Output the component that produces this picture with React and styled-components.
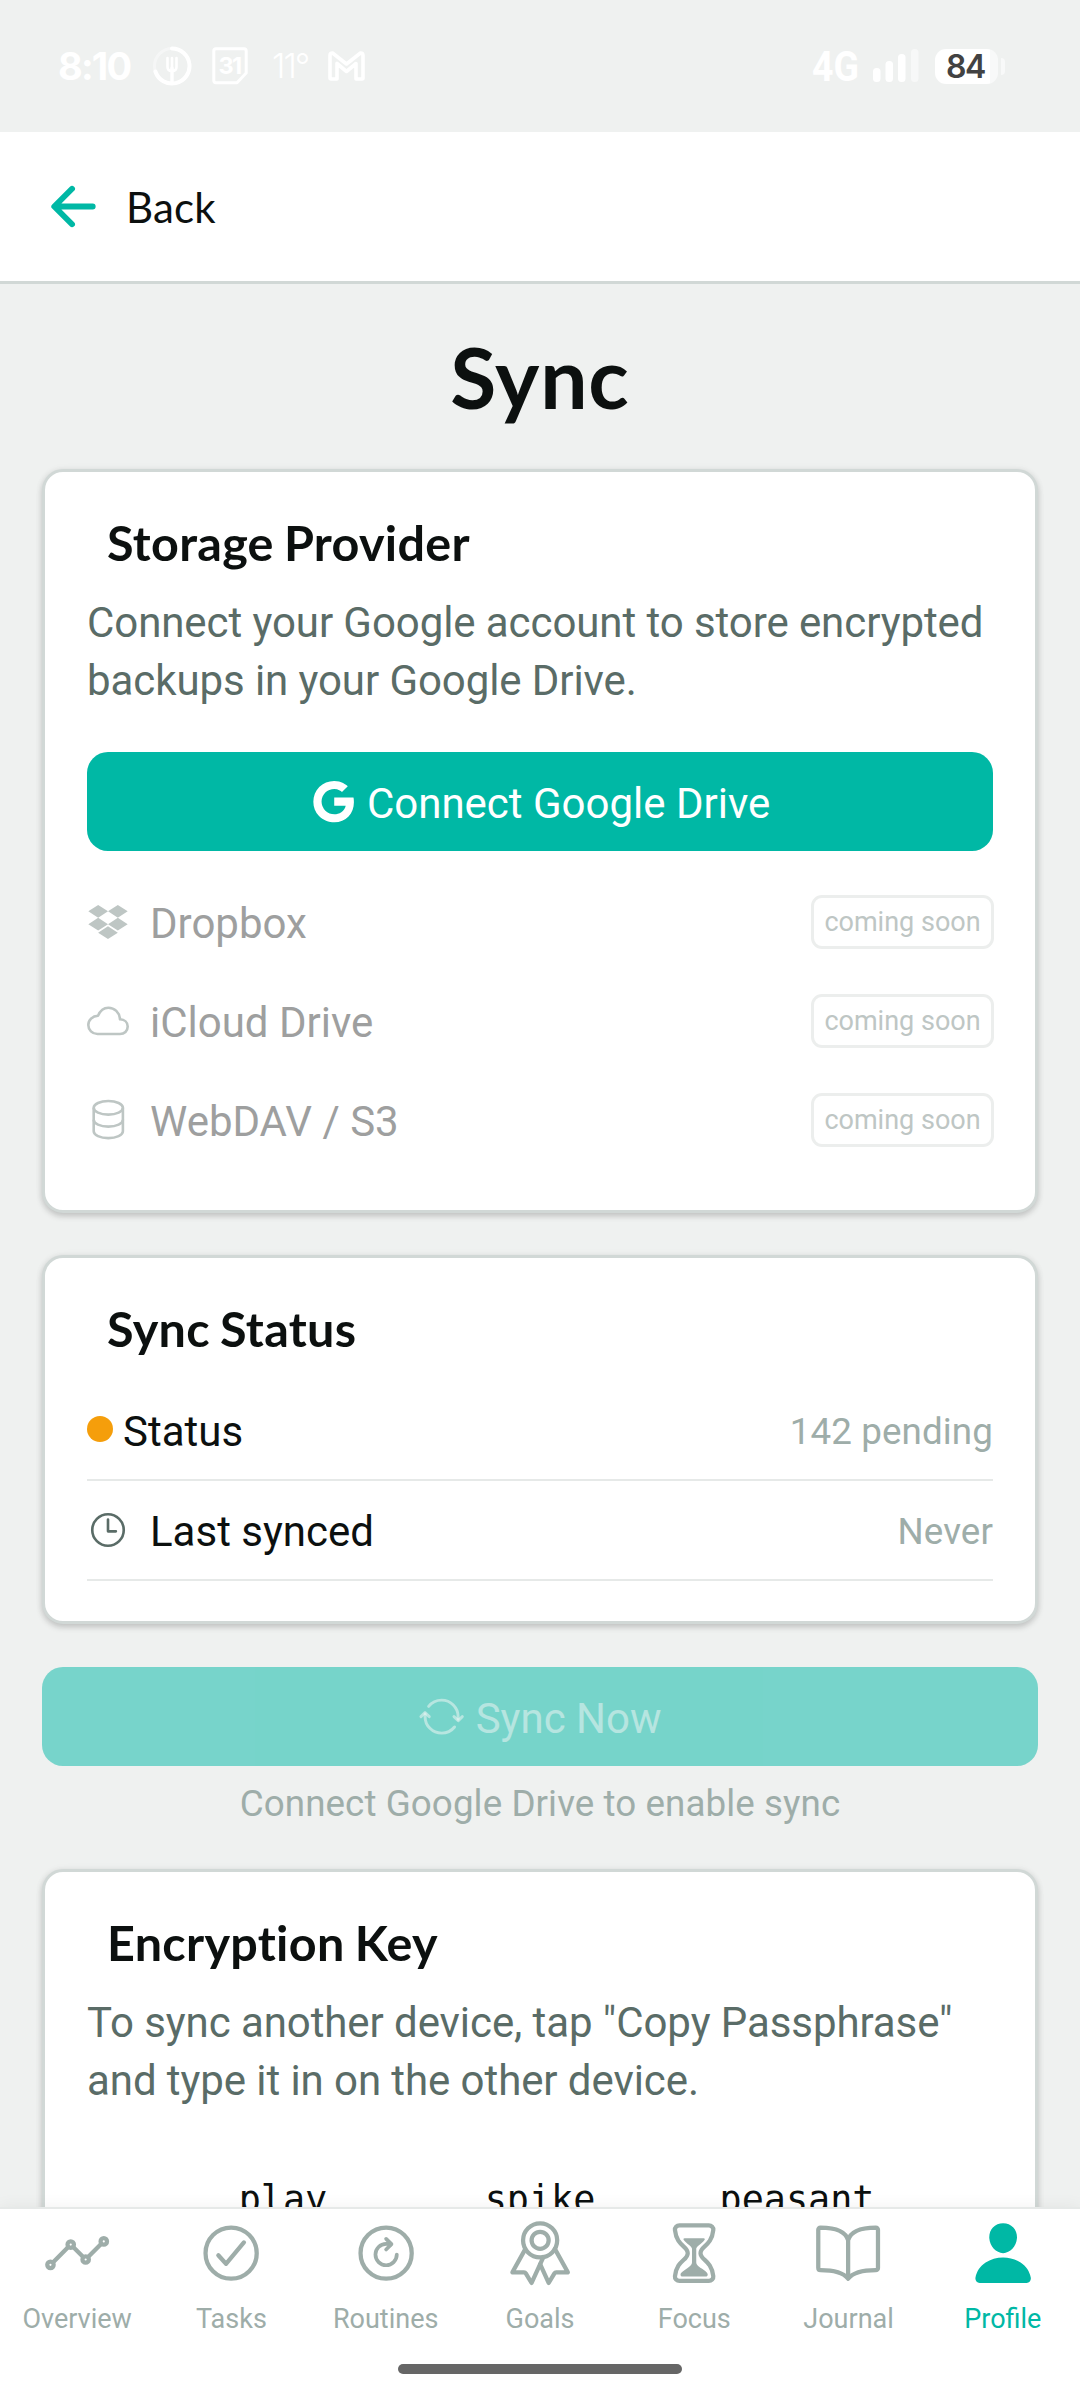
import styled, { createGlobalStyle } from 'styled-components';
import {
  IoAnalyticsOutline,
  IoArrowBack,
  IoBookOutline,
  IoCheckmarkCircleOutline,
  IoHourglassOutline,
  IoLogoDropbox,
  IoLogoGoogle,
  IoPerson,
  IoRefreshCircleOutline,
  IoRibbonOutline,
  IoSyncOutline,
  IoTimeOutline,
} from 'react-icons/io5';

const colors = {
  background: '#eff1f0',
  surface: '#ffffff',
  border: '#d1d8d6',
  divider: '#e6e9e8',
  text: '#0c100f',
  secondary: '#5a6c67',
  muted: '#9eada9',
  primary: '#00b8a5',
  warning: '#f59e0b',
};

const GlobalStyle = createGlobalStyle`
  * {
    box-sizing: border-box;
  }

  body {
    margin: 0;
    background: ${colors.background};
    font-family: Roboto, sans-serif;
    color: ${colors.text};
  }

  svg {
    display: block;
    flex-shrink: 0;
  }
`;

const Screen = styled.div`
  display: flex;
  flex-direction: column;
  width: 1080px;
  height: 2400px;
  overflow: hidden;
`;

/* status bar */

const StatusBarRow = styled.div`
  display: flex;
  justify-content: space-between;
  align-items: center;
  height: 132px;
  padding: 0 75px 0 58px;
  color: #fff;
  flex-shrink: 0;
`;

const StatusGroup = styled.div`
  display: flex;
  align-items: center;
`;

const Clock = styled.span`
  width: 94px;
  font: 700 38px/44px Inter, sans-serif;
  letter-spacing: -1.8px;
`;

const Temperature = styled.span`
  width: 56px;
  margin-left: 24px;
  font: 300 34px/44px Inter, sans-serif;
  letter-spacing: -2px;
`;

const Network = styled.span`
  width: 61px;
  font: 700 43px/44px Roboto, sans-serif;
  transform: scaleX(0.87);
  transform-origin: left center;
`;

const Battery = styled.div`
  display: flex;
  align-items: center;
  justify-content: center;
  width: 63px;
  height: 35px;
  margin-left: 16px;
  padding-right: 2px;
  border-radius: 11px;
  background: linear-gradient(to right, #fff 55px, #f8f9f9 55px);
  color: #424242;
  font: 600 32px/35px Inter, sans-serif;
  letter-spacing: -1.5px;
`;

const BatteryTip = styled.div`
  width: 4px;
  height: 17px;
  margin-left: 3px;
  border-radius: 0 4px 4px 0;
  background: #f8f9f9;
`;

/* header */

const Header = styled.header`
  display: flex;
  align-items: center;
  gap: 21px;
  height: 152px;
  padding: 0 42px;
  background: ${colors.surface};
  border-bottom: 3px solid ${colors.border};
  flex-shrink: 0;
`;

const BackLabel = styled.span`
  font: 400 42px/50px Lato, sans-serif;
  letter-spacing: 0.2px;
`;

/* page */

const Content = styled.main`
  display: flex;
  flex-direction: column;
  flex: 1;
  min-height: 0;
  padding: 42px 42px 0;
  overflow: hidden;
`;

const PageTitle = styled.h1`
  margin: 0 0 42px;
  font: 700 84px/101px Lato, sans-serif;
  letter-spacing: 0.8px;
  text-align: center;
`;

const Card = styled.section`
  margin-bottom: ${(props) => props.$gap || 42}px;
  padding: 42px 42px ${(props) => props.$bottom}px;
  background: ${colors.surface};
  border: 3px solid ${colors.border};
  border-radius: 21px;
  box-shadow: 0 3px 6px rgba(0, 0, 0, 0.19), 0 0 8px rgba(0, 0, 0, 0.04);
  flex-shrink: 0;
`;

const CardTitle = styled.h2`
  margin: 0 0 23px 20px;
  font: 700 48.5px/57px Lato, sans-serif;
  font-variant-ligatures: none;
  letter-spacing: 0.3px;
  word-spacing: -2px;
`;

const Description = styled.p`
  margin: 0 0 42px;
  color: ${colors.secondary};
  font-size: 42px;
  line-height: 58px;
  letter-spacing: -0.08px;
  white-space: pre-line;
`;

const Button = styled.button`
  display: flex;
  align-items: center;
  justify-content: center;
  gap: 10px;
  width: 100%;
  height: 99px;
  padding: 0;
  border: 0;
  border-radius: 21px;
  background: ${colors.primary};
  color: #fff;
  font: 400 42px/50px Roboto, sans-serif;
  flex-shrink: 0;

  &:disabled {
    opacity: 0.5;
    color: rgba(255, 255, 255, 0.5);
  }
`;

const ButtonText = styled.span`
  padding-top: 5px;
`;

const ProviderList = styled.div`
  margin: 21px -1px 0 0;
`;

const Provider = styled.div`
  display: flex;
  align-items: center;
  gap: 21px;
  height: 99px;
  color: #bec6c4;
`;

const RowLabel = styled.span`
  flex: 1;
  padding-top: 4px;
  color: ${(props) => (props.$disabled ? '#9e9f9f' : colors.text)};
  font-size: 42px;
  line-height: 50px;
`;

const Badge = styled.span`
  display: flex;
  align-items: center;
  justify-content: center;
  width: 183px;
  height: 54px;
  border: 3px solid #eceeed;
  border-radius: 11px;
  font-size: 27px;
`;

const StatusList = styled.div`
  padding-top: 1px;
`;

const StatusRow = styled.div`
  display: flex;
  align-items: center;
  gap: ${(props) => props.$gap}px;
  height: 100px;
  border-bottom: 2px solid ${colors.divider};
  color: ${colors.secondary};
`;

const Dot = styled.span`
  width: 26px;
  height: 26px;
  margin-bottom: 2px;
  border-radius: 50%;
  background: ${colors.warning};
`;

const RowValue = styled.span`
  padding-top: 3px;
  color: ${colors.muted};
  font-size: 36.75px;
  letter-spacing: 0.1px;
`;

const Hint = styled.p`
  margin: 16px 0 43px;
  color: ${colors.muted};
  font-size: 36.75px;
  line-height: 44px;
  letter-spacing: 0.08px;
  text-align: center;
`;

const WordGrid = styled.div`
  display: grid;
  grid-template-columns: repeat(3, 257px);
  justify-content: center;
  padding-top: 26px;
  font: 400 36.75px/44px 'DejaVu Sans Mono', monospace;
  text-align: center;
`;

/* bottom tabs */

const TabBar = styled.nav`
  position: relative;
  height: 193px;
  background: ${colors.surface};
  border-top: 2px solid ${colors.divider};
  box-shadow: 0 0 16px rgba(0, 0, 0, 0.06);
  flex-shrink: 0;
`;

const Tabs = styled.div`
  display: grid;
  grid-template-columns: repeat(7, 1fr);
  padding-top: 10px;
`;

const Tab = styled.div`
  display: flex;
  flex-direction: column;
  align-items: center;
  gap: 16px;
  color: ${(props) => (props.$active ? colors.primary : colors.muted)};
  font-size: 27px;
  line-height: 32px;
`;

const HomeIndicator = styled.div`
  width: 284px;
  height: 10px;
  margin: 29px auto 0;
  border-radius: 5px;
  background: #666;
`;

function CloudIcon({ size }) {
  return (
    <svg width={size} height={size} viewBox='0 0 42 42'>
      <path
        d='M11 15.8C13 11 17 7.7 21.4 7.7C27.5 7.7 32.5 12.5 33 19.3C37.5 19.5 40.7 22.5 40.7 26.5C40.7 31 37.3 34 33 34H10.5C5.3 34 1.3 30 1.3 25C1.3 20 5.5 16 11 15.8z'
        fill='none'
        stroke='currentColor'
        strokeWidth='2.6'
        strokeLinejoin='round'
      />
    </svg>
  );
}

function DatabaseIcon({ size }) {
  return (
    <svg
      width={size}
      height={size}
      viewBox='0 0 42 42'
      fill='none'
      stroke='currentColor'
      strokeWidth='2.6'
    >
      <ellipse cx='21.3' cy='8.8' rx='14.6' ry='6.8' />
      <path d='M6.7 8.8V32.3C6.7 36.1 13.2 39.1 21.3 39.1S35.9 36.1 35.9 32.3V8.8' />
      <path d='M6.7 20.8C6.7 24.6 13.2 27.6 21.3 27.6S35.9 24.6 35.9 20.8' />
    </svg>
  );
}

const providers = [
  { name: 'Dropbox', Icon: IoLogoDropbox },
  { name: 'iCloud Drive', Icon: CloudIcon },
  { name: 'WebDAV / S3', Icon: DatabaseIcon },
];

const words = ['play', 'spike', 'peasant'];

const tabs = [
  { label: 'Overview', Icon: IoAnalyticsOutline },
  { label: 'Tasks', Icon: IoCheckmarkCircleOutline },
  { label: 'Routines', Icon: IoRefreshCircleOutline },
  { label: 'Goals', Icon: IoRibbonOutline },
  { label: 'Focus', Icon: IoHourglassOutline },
  { label: 'Journal', Icon: IoBookOutline },
  { label: 'Profile', Icon: IoPerson, active: true },
];

function ForkIcon() {
  return (
    <svg width='40' height='40' viewBox='0 0 40 40' fill='none' stroke='#fff' strokeLinecap='round'>
      <circle cx='20' cy='20' r='17.5' strokeWidth='3' opacity='0.4' />
      <path d='M20 2.5a17.5 17.5 0 1 1-16.6 23' strokeWidth='4' />
      <path d='M15.5 12v9q0 4 4.5 4t4.5-4v-9M20 12v12' strokeWidth='2.6' />
      <path d='M20 22v14' strokeWidth='3.4' />
    </svg>
  );
}

function CalendarIcon() {
  return (
    <svg width='36' height='38' viewBox='0 0 36 38'>
      <path
        d='M4 1.8h28q2.2 0 2.2 2.2v22L25 35.8H4Q1.8 35.8 1.8 33.6V4Q1.8 1.8 4 1.8z'
        fill='none'
        stroke='#fff'
        strokeWidth='3'
        strokeLinejoin='round'
      />
      <text
        x='17.5'
        y='27'
        fill='#fff'
        fontFamily='Inter, sans-serif'
        fontSize='23.5'
        fontWeight='700'
        letterSpacing='-1.6'
        textAnchor='middle'
      >
        31
      </text>
    </svg>
  );
}

function MailIcon() {
  return (
    <svg width='37' height='30' viewBox='0 0 37 30'>
      <path
        d='M2 27V4.5Q2 2 4.5 2L18.5 13 32.5 2Q35 2 35 4.5V27q0 1-1 1H28V12.5L18.5 20.5 9 12.5V28H3q-1 0-1-1z'
        fill='none'
        stroke='#fff'
        strokeWidth='3.6'
        strokeLinejoin='round'
      />
    </svg>
  );
}

function SignalIcon() {
  return (
    <svg width='46' height='34' viewBox='0 0 46 34' fill='#fff'>
      <rect x='0' y='19' width='7.5' height='14' rx='3.5' />
      <rect x='12.5' y='12' width='7.5' height='21' rx='3.5' />
      <rect x='25' y='5' width='7.5' height='28' rx='3.5' />
      <rect x='38' y='0' width='7.5' height='33' rx='3.5' opacity='0.5' />
    </svg>
  );
}

const StatusIcon = styled.span`
  margin-left: ${(props) => props.$left || 0}px;
`;

function StatusBar() {
  return (
    <StatusBarRow>
      <StatusGroup>
        <Clock>8:10</Clock>
        <StatusIcon>
          <ForkIcon />
        </StatusIcon>
        <StatusIcon $left={20}>
          <CalendarIcon />
        </StatusIcon>
        <Temperature>11°</Temperature>
        <StatusIcon>
          <MailIcon />
        </StatusIcon>
      </StatusGroup>
      <StatusGroup>
        <Network>4G</Network>
        <SignalIcon />
        <Battery>84</Battery>
        <BatteryTip />
      </StatusGroup>
    </StatusBarRow>
  );
}

function App() {
  return (
    <Screen>
      <GlobalStyle />
      <StatusBar />
      <Header>
        <IoArrowBack size={63} color={colors.primary} />
        <BackLabel>Back</BackLabel>
      </Header>

      <Content>
        <PageTitle>Sync</PageTitle>

        <Card $bottom={41}>
          <CardTitle>Storage Provider</CardTitle>
          <Description>
            {'Connect your Google account to store encrypted\nbackups in your Google Drive.'}
          </Description>
          <Button>
            <IoLogoGoogle size={47.25} />
            <ButtonText>Connect Google Drive</ButtonText>
          </Button>
          <ProviderList>
            {providers.map(({ name, Icon }) => (
              <Provider key={name}>
                <Icon size={42} />
                <RowLabel $disabled>{name}</RowLabel>
                <Badge>coming soon</Badge>
              </Provider>
            ))}
          </ProviderList>
        </Card>

        <Card $bottom={40} $gap={43}>
          <CardTitle>Sync Status</CardTitle>
          <StatusList>
            <StatusRow $gap={10}>
              <Dot />
              <RowLabel>Status</RowLabel>
              <RowValue>142 pending</RowValue>
            </StatusRow>
            <StatusRow $gap={21}>
              <IoTimeOutline size={42} />
              <RowLabel>Last synced</RowLabel>
              <RowValue>Never</RowValue>
            </StatusRow>
          </StatusList>
        </Card>

        <Button disabled>
          <IoSyncOutline size={47.25} />
          <ButtonText>Sync Now</ButtonText>
        </Button>
        <Hint>Connect Google Drive to enable sync</Hint>

        <Card $bottom={42}>
          <CardTitle>Encryption Key</CardTitle>
          <Description>
            {'To sync another device, tap "Copy Passphrase"\nand type it in on the other device.'}
          </Description>
          <WordGrid>
            {words.map((word) => (
              <span key={word}>{word}</span>
            ))}
          </WordGrid>
        </Card>
      </Content>

      <TabBar>
        <Tabs>
          {tabs.map(({ label, Icon, active }) => (
            <Tab key={label} $active={active}>
              <Icon size={68.25} />
              <span>{label}</span>
            </Tab>
          ))}
        </Tabs>
        <HomeIndicator />
      </TabBar>
    </Screen>
  );
}

export default App;
